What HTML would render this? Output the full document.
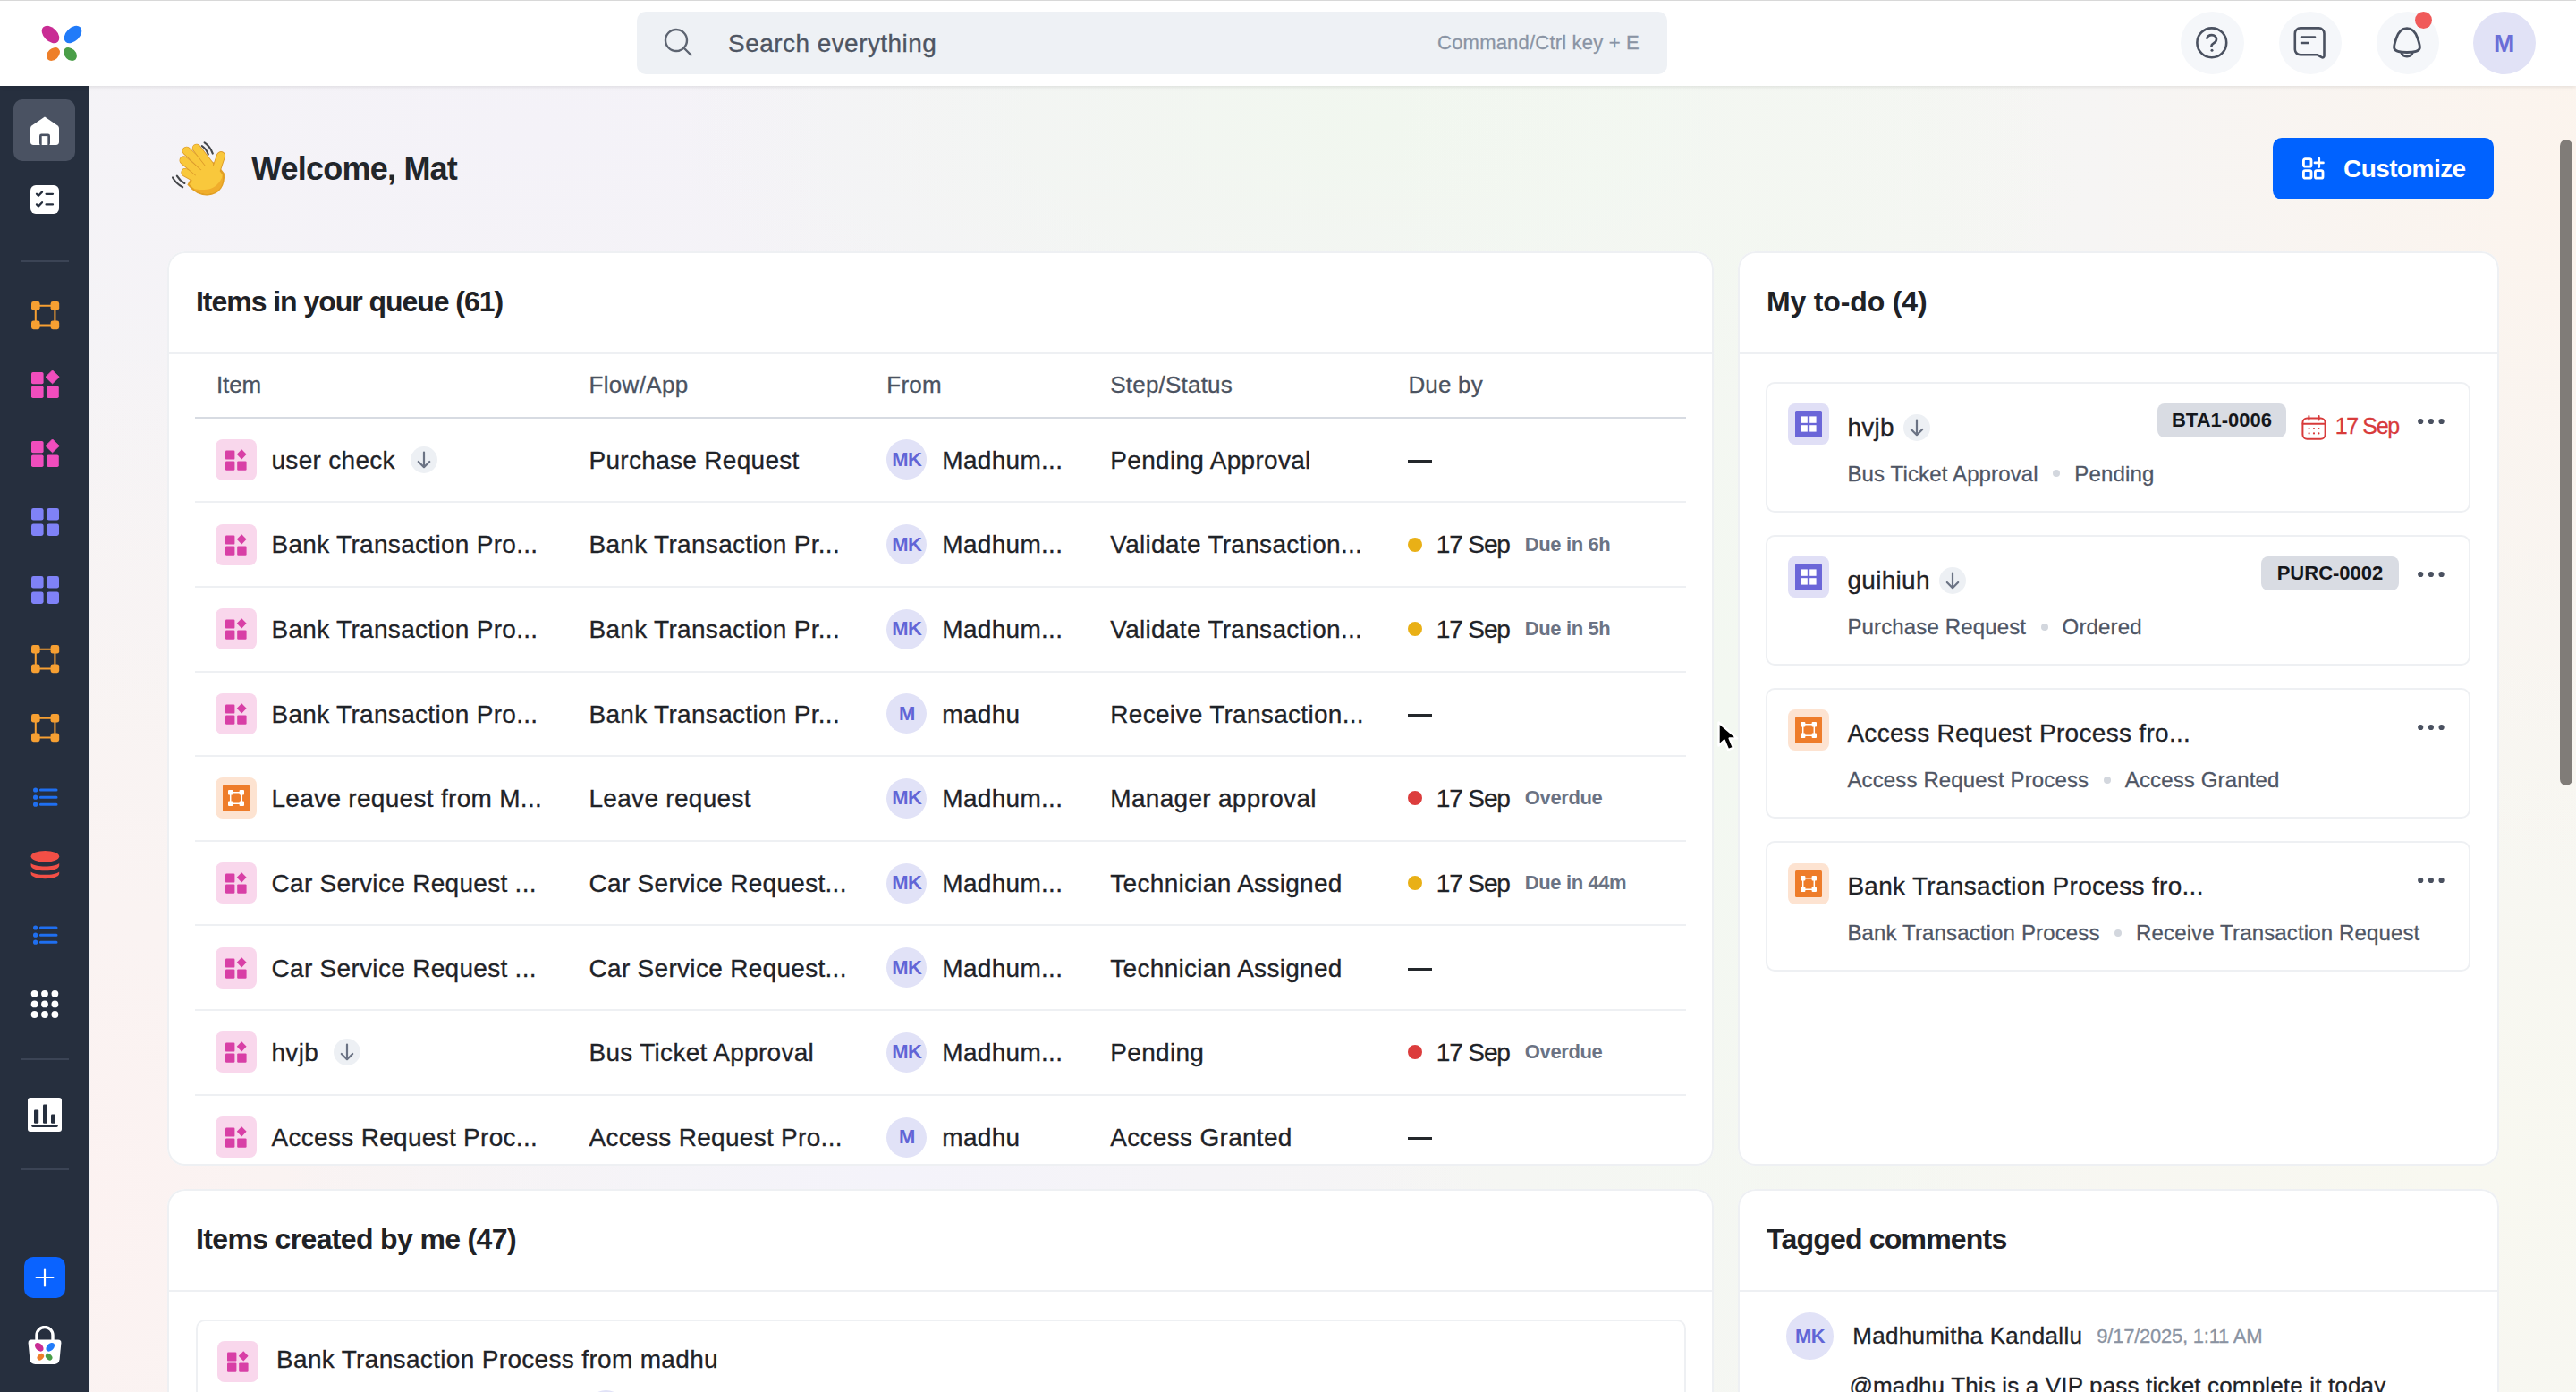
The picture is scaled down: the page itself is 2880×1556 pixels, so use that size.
<!DOCTYPE html>
<html>
<head>
<meta charset="utf-8">
<style>
*{box-sizing:border-box;margin:0;padding:0}
html,body{width:2880px;height:1556px;overflow:hidden}
body{position:relative;font-family:"Liberation Sans",sans-serif;color:#1f2328;
background:
 radial-gradient(ellipse 450px 1300px at 1930px 800px, rgba(243,248,241,1), rgba(243,248,241,0) 100%),
 radial-gradient(ellipse 800px 350px at 1550px 140px, rgba(241,247,239,1), rgba(241,247,239,0) 100%),
 radial-gradient(ellipse 550px 800px at 2880px 200px, rgba(252,244,237,1), rgba(252,244,237,0) 100%),
 radial-gradient(ellipse 1000px 900px at 2750px 1300px, rgba(248,248,240,1), rgba(248,248,240,0) 100%),
 radial-gradient(ellipse 700px 250px at 1000px 1315px, rgba(244,243,250,1), rgba(244,243,250,0) 100%),
 radial-gradient(ellipse 700px 1000px at 80px 1350px, rgba(252,242,241,1), rgba(252,242,241,0) 100%),
 radial-gradient(ellipse 1500px 700px at 600px 150px, rgba(244,242,248,1), rgba(244,242,248,0) 100%),
 #f6f5f4;-webkit-text-stroke-width:0.3px}
.abs{position:absolute}
.t{position:absolute;white-space:nowrap;line-height:1}
#topline{left:0;top:0;width:2880px;height:1px;background:#d8d8d8;z-index:5}
#header{left:0;top:0;width:2880px;height:96px;background:#fff;box-shadow:0 1px 5px rgba(0,0,0,0.10);z-index:3}
#sidebar{left:0;top:96px;width:101px;height:1460px;background:#262f3e;z-index:2;border-right:1px solid #f3f3f5}
.card{position:absolute;background:#fff;box-shadow:inset 0 0 0 2px #eef0f3;border-radius:20px;overflow:hidden}
.sep{position:absolute;left:0;right:0;height:2px;background:#eef0f3}

/*MAINCSS*/
.ctitle{font-size:32px;font-weight:700;color:#1f2226;-webkit-text-stroke-width:0}
.th{font-size:26px;color:#4b5361}
.row{position:absolute;left:31px;width:1667px;height:94.64px}
.rsep{position:absolute;left:0;right:0;top:0;height:2px;background:#eef0f3}
.c{position:absolute;top:2px;bottom:0;display:flex;align-items:center;white-space:nowrap}
.rt{font-size:28px;color:#1f2328;letter-spacing:0.3px;line-height:1;white-space:nowrap;position:relative;top:0.8px}
.ib{width:46px;height:46px;border-radius:8px;display:flex;align-items:center;justify-content:center;flex:none}
.ib.pink{background:#f9d7ec}
.ib.orange{background:#fde3d1}
.ib.lav{background:#e0dff6}
.arr{width:30px;height:30px;border-radius:50%;background:#edf0f4;margin-left:17px;flex:none}
.arr svg{display:block}
.av{width:45px;height:45px;border-radius:50%;background:#e1e2f7;color:#6165d6;font-weight:700;font-size:22px;display:flex;align-items:center;justify-content:center;flex:none;letter-spacing:-0.5px}
.dash{width:27px;height:3px;background:#23272b;position:relative;top:1.5px}
.dot{width:16px;height:16px;border-radius:50%;flex:none}
.due{font-size:22px;font-weight:700;color:#6b7384;margin-left:17px;letter-spacing:-0.4px;line-height:1}
.todo{position:absolute;left:31px;width:788px;height:146px;border-radius:10px;box-shadow:inset 0 0 0 2px #eef0f3}
.tt{display:flex;align-items:center;height:50px;font-size:28px;color:#1f2328;letter-spacing:0.3px;white-space:nowrap}
.tt .arr{margin-left:10px}
.st{font-size:24px;color:#4f5665;letter-spacing:0.14px}
.sdot{display:inline-block;width:8px;height:8px;border-radius:50%;background:#d3d7de;margin:0 16px 0 16.5px;vertical-align:middle;position:relative;top:-2px}
[style*="font-weight:700"],.badge,.due,.av{-webkit-text-stroke-width:0}
.badge{position:absolute;top:24.8px;height:38px;border-radius:8px;background:#d9dce3;font-size:22px;font-weight:700;color:#15171b;display:flex;align-items:center;justify-content:center;letter-spacing:0px}
/*/MAINCSS*/</style>
</head>
<body>
<div id="topline" class="abs"></div>
<div id="header" class="abs">
  <!-- logo -->
  <svg class="abs" style="left:44px;top:26px" width="52" height="46" viewBox="0 0 52 46">
    <ellipse cx="12.5" cy="12.5" rx="11.5" ry="7.6" transform="rotate(45 12.5 12.5)" fill="#c92c94"/>
    <ellipse cx="37.5" cy="12.5" rx="11.5" ry="7.6" transform="rotate(-45 37.5 12.5)" fill="#217bf9"/>
    <ellipse cx="15.5" cy="34.5" rx="8.5" ry="6.2" transform="rotate(-45 15.5 34.5)" fill="#ee7f29"/>
    <ellipse cx="34.5" cy="34.5" rx="8.5" ry="6.2" transform="rotate(45 34.5 34.5)" fill="#4a9e48"/>
  </svg>
  <!-- search -->
  <div class="abs" style="left:712px;top:13px;width:1152px;height:70px;background:#eef1f5;border-radius:10px">
    <svg class="abs" style="left:30px;top:18px" width="34" height="34" viewBox="0 0 34 34">
      <circle cx="14" cy="14" r="12" fill="none" stroke="#5d6471" stroke-width="2.4"/>
      <line x1="23" y1="23" x2="30.5" y2="30.5" stroke="#5d6471" stroke-width="2.4" stroke-linecap="round"/>
    </svg>
    <div class="t" style="left:102px;top:21.5px;font-size:28px;color:#4e5562;letter-spacing:0.45px">Search everything</div>
    <div class="t" style="right:31px;top:23.6px;font-size:22px;color:#8a94a4;letter-spacing:0.2px">Command/Ctrl key + E</div>
  </div>
  <!-- right icons -->
  <div class="abs" style="left:2438px;top:13px;width:71px;height:70px;border-radius:50%;background:#f5f7fa"></div>
  <div class="abs" style="left:2548px;top:13px;width:70px;height:70px;border-radius:50%;background:#f5f7fa"></div>
  <div class="abs" style="left:2657px;top:13px;width:70px;height:70px;border-radius:50%;background:#f5f7fa"></div>
  <div class="abs" style="left:2765px;top:13px;width:70px;height:70px;border-radius:50%;background:#e1e2f6"></div>
  <div class="t" style="left:2788px;top:34.6px;font-size:28px;font-weight:700;color:#6a6ed7">M</div>

  <svg class="abs" style="left:2455px;top:30px" width="36" height="36" viewBox="0 0 36 36" fill="none" stroke="#4a5160" stroke-width="2.6" stroke-linecap="round" stroke-linejoin="round">
    <circle cx="17.8" cy="17.8" r="16.4"/>
    <path d="M12.4 12.8 C13 10.5 15 9.1 17.8 9.1 C20.8 9.1 23 11.2 23 14 C23 16.6 21 17.6 19.4 18.6 C18 19.4 17.4 20.4 17.4 21.8"/>
    <circle cx="18" cy="26.2" r="1.5" fill="#4a5160" stroke="none"/>
  </svg>
  <svg class="abs" style="left:2564px;top:29px" width="37" height="38" viewBox="0 0 37 38" fill="none" stroke="#4a5160" stroke-width="2.6" stroke-linejoin="round" stroke-linecap="round">
    <path d="M7.8 2.4 H28.5 a6 6 0 0 1 6 6 V33.6 a1.8 1.8 0 0 1 -2.7 1.6 L27 32.3 H7.8 a6 6 0 0 1 -6 -6 V8.4 a6 6 0 0 1 6 -6 Z"/>
    <path d="M9 12.5 H24 M9 19 H16.6"/>
  </svg>
  <svg class="abs" style="left:2672px;top:28px" width="38" height="40" viewBox="0 0 38 40" fill="none" stroke="#4a5160" stroke-width="2.8" stroke-linejoin="round" stroke-linecap="round">
    <path d="M19 3.6 C12 3.6 9 9 7.2 14.5 C5.6 19 4.6 22 4.6 25 C4.6 28 8 30.5 19 30.5 C30 30.5 33.4 28 33.4 25 C33.4 22 32.4 19 30.8 14.5 C29 9 26 3.6 19 3.6 Z"/>
    <path d="M12.8 30.8 C14 36.5 24 36.5 25.2 30.8"/>
  </svg>
  <div class="abs" style="left:2700px;top:13px;width:19px;height:19px;border-radius:50%;background:#f05a5a"></div>
</div>
<div id="sidebar" class="abs">
  <div class="abs" style="left:15px;top:15px;width:69px;height:69px;border-radius:10px;background:#4a5262"></div>
  <svg class="abs" style="left:34px;top:34px" width="32" height="32" viewBox="0 0 32 32">
    <path d="M16 0.6 L30.6 10.4 Q32 11.4 32 13.2 V28.6 Q32 32 28.6 32 H3.4 Q0 32 0 28.6 V13.2 Q0 11.4 1.4 10.4 Z" fill="#fff"/>
    <rect x="10" y="19.4" width="12" height="13" rx="2.4" fill="#4a5262"/>
    <rect x="12.7" y="22.1" width="6.6" height="10" fill="#fff"/>
  </svg>
  <svg class="abs" style="left:34px;top:111px" width="32" height="32" viewBox="0 0 32 32">
    <rect x="0" y="0" width="32" height="32" rx="6" fill="#fff"/>
    <g fill="none" stroke="#262f3e" stroke-width="2.3" stroke-linecap="round" stroke-linejoin="round">
      <path d="M7 9.8 L9 11.8 L13 7.6 M17.6 9.8 H25"/>
      <path d="M7 21.4 L9 23.4 L13 19.2 M17.6 21.4 H25"/>
    </g>
  </svg>
  <div class="abs" style="left:23px;top:195px;width:54px;height:2px;background:#3b4455"></div>
  <svg class="abs" style="left:35px;top:241px" width="32" height="32" viewBox="0 0 32 32" fill="#f7a032">
    <rect x="0" y="0" width="9.6" height="9.6" rx="2.4"/><rect x="21.6" y="0" width="9.6" height="9.6" rx="2.4"/>
    <rect x="0" y="21.6" width="9.6" height="9.6" rx="2.4"/><rect x="21.6" y="21.6" width="9.6" height="9.6" rx="2.4"/>
    <path d="M9 4.8 H22 M9 26.4 H22 M4.8 9 V22 M26.4 9 V22" stroke="#f7a032" stroke-width="2"/>
  </svg>
  <svg class="abs" style="left:35px;top:318px" width="32" height="32" viewBox="0 0 32 32" fill="#f04dbd">
    <rect x="0" y="2" width="13.6" height="13.2" rx="1.8"/><rect x="0" y="17.4" width="13.6" height="13.6" rx="1.8"/>
    <rect x="17.2" y="17.4" width="13.6" height="13.6" rx="1.8"/>
    <path d="M23.6 0 L31.2 7.4 L23.6 14.8 L16 7.4 Z" stroke="#f04dbd" stroke-width="1" stroke-linejoin="round"/>
  </svg>
  <svg class="abs" style="left:35px;top:395px" width="32" height="32" viewBox="0 0 32 32" fill="#f04dbd">
    <rect x="0" y="2" width="13.6" height="13.2" rx="1.8"/><rect x="0" y="17.4" width="13.6" height="13.6" rx="1.8"/>
    <rect x="17.2" y="17.4" width="13.6" height="13.6" rx="1.8"/>
    <path d="M23.6 0 L31.2 7.4 L23.6 14.8 L16 7.4 Z" stroke="#f04dbd" stroke-width="1" stroke-linejoin="round"/>
  </svg>
  <svg class="abs" style="left:35px;top:472px" width="32" height="32" viewBox="0 0 32 32" fill="#7f82f7">
    <rect x="0" y="0" width="13.6" height="13.6" rx="2.4"/><rect x="17.4" y="0" width="13.6" height="13.6" rx="2.4"/>
    <rect x="0" y="17.4" width="13.6" height="13.6" rx="2.4"/><rect x="17.4" y="17.4" width="13.6" height="13.6" rx="2.4"/>
  </svg>
  <svg class="abs" style="left:35px;top:548px" width="32" height="32" viewBox="0 0 32 32" fill="#7f82f7">
    <rect x="0" y="0" width="13.6" height="13.6" rx="2.4"/><rect x="17.4" y="0" width="13.6" height="13.6" rx="2.4"/>
    <rect x="0" y="17.4" width="13.6" height="13.6" rx="2.4"/><rect x="17.4" y="17.4" width="13.6" height="13.6" rx="2.4"/>
  </svg>
  <svg class="abs" style="left:35px;top:625px" width="32" height="32" viewBox="0 0 32 32" fill="#f7a032">
    <rect x="0" y="0" width="9.6" height="9.6" rx="2.4"/><rect x="21.6" y="0" width="9.6" height="9.6" rx="2.4"/>
    <rect x="0" y="21.6" width="9.6" height="9.6" rx="2.4"/><rect x="21.6" y="21.6" width="9.6" height="9.6" rx="2.4"/>
    <path d="M9 4.8 H22 M9 26.4 H22 M4.8 9 V22 M26.4 9 V22" stroke="#f7a032" stroke-width="2"/>
  </svg>
  <svg class="abs" style="left:35px;top:702px" width="32" height="32" viewBox="0 0 32 32" fill="#f7a032">
    <rect x="0" y="0" width="9.6" height="9.6" rx="2.4"/><rect x="21.6" y="0" width="9.6" height="9.6" rx="2.4"/>
    <rect x="0" y="21.6" width="9.6" height="9.6" rx="2.4"/><rect x="21.6" y="21.6" width="9.6" height="9.6" rx="2.4"/>
    <path d="M9 4.8 H22 M9 26.4 H22 M4.8 9 V22 M26.4 9 V22" stroke="#f7a032" stroke-width="2"/>
  </svg>
  <svg class="abs" style="left:35px;top:782px" width="32" height="26" viewBox="0 0 32 26" fill="#1f6ff0">
    <circle cx="4.6" cy="5" r="2.6"/><circle cx="4.6" cy="13.2" r="2.6"/><circle cx="4.6" cy="21.2" r="2.6"/>
    <path d="M10.4 5 H28 M10.4 13.2 H28 M10.4 21.2 H28" stroke="#1f6ff0" stroke-width="3" stroke-linecap="round"/>
  </svg>
  <svg class="abs" style="left:34px;top:854px" width="33" height="33" viewBox="0 0 33 33" fill="#f34f46">
    <ellipse cx="16.4" cy="7.3" rx="15.8" ry="6.3"/>
    <path d="M0.6 15 C5 19.6 27.8 19.6 32.2 15 L32.2 17.4 C32.2 21 25 23.2 16.4 23.2 C7.8 23.2 0.6 21 0.6 17.4 Z"/>
    <path d="M0.6 24.4 C5 29 27.8 29 32.2 24.4 L32.2 26.6 C32.2 30.2 25 32.2 16.4 32.2 C7.8 32.2 0.6 30.2 0.6 26.6 Z"/>
  </svg>
  <svg class="abs" style="left:35px;top:936px" width="32" height="26" viewBox="0 0 32 26" fill="#1f6ff0">
    <circle cx="4.6" cy="5" r="2.6"/><circle cx="4.6" cy="13.2" r="2.6"/><circle cx="4.6" cy="21.2" r="2.6"/>
    <path d="M10.4 5 H28 M10.4 13.2 H28 M10.4 21.2 H28" stroke="#1f6ff0" stroke-width="3" stroke-linecap="round"/>
  </svg>
  <svg class="abs" style="left:34px;top:1010px" width="32" height="32" viewBox="0 0 32 32" fill="#fff">
    <circle cx="4.6" cy="4.8" r="3.9"/><circle cx="16" cy="4.8" r="3.9"/><circle cx="27.4" cy="4.8" r="3.9"/>
    <circle cx="4.6" cy="16.4" r="3.9"/><circle cx="16" cy="16.4" r="3.9"/><circle cx="27.4" cy="16.4" r="3.9"/>
    <circle cx="4.6" cy="28" r="3.9"/><circle cx="16" cy="28" r="3.9"/><circle cx="27.4" cy="28" r="3.9"/>
  </svg>
  <div class="abs" style="left:23px;top:1087px;width:54px;height:2px;background:#3b4455"></div>
  <svg class="abs" style="left:31px;top:1131px" width="38" height="38" viewBox="0 0 38 38">
    <rect x="0" y="0" width="38" height="38" rx="3" fill="#fff"/>
    <g fill="#262f3e"><rect x="7" y="13.4" width="5.2" height="15.4" rx="1.2"/><rect x="17" y="7.6" width="5" height="21.2" rx="1.2"/><rect x="26" y="18.6" width="5" height="10.2" rx="1.2"/>
    <rect x="4.2" y="30.2" width="29.6" height="2.8" rx="1.4"/></g>
  </svg>
  <div class="abs" style="left:23px;top:1210px;width:54px;height:2px;background:#3b4455"></div>
  <div class="abs" style="left:27px;top:1309px;width:46px;height:46px;border-radius:10px;background:#0a63ff"></div>
  <svg class="abs" style="left:27px;top:1309px" width="46" height="46" viewBox="0 0 46 46"><path d="M23 13.6 V32.4 M13.6 23 H32.4" stroke="#fff" stroke-width="2.2" stroke-linecap="round"/></svg>
  <svg class="abs" style="left:31px;top:1386px" width="38" height="44" viewBox="0 0 38 44">
    <path d="M10 17 V10.5 a9 9 0 0 1 18 0 V17" fill="none" stroke="#fff" stroke-width="3.4"/>
    <path d="M4 15.6 H34 Q37.6 15.6 37.4 19.2 L35.6 37.6 Q35 43 29.6 43 H8.4 Q3 43 2.4 37.6 L0.6 19.2 Q0.4 15.6 4 15.6 Z" fill="#fff"/>
    <g transform="translate(19 29.5) scale(1.3) translate(-19 -29)">
    <ellipse cx="14.2" cy="24.6" rx="4.4" ry="2.9" transform="rotate(45 14.2 24.6)" fill="#c92c94"/>
    <ellipse cx="23.8" cy="24.6" rx="4.4" ry="2.9" transform="rotate(-45 23.8 24.6)" fill="#217bf9"/>
    <ellipse cx="15.4" cy="33" rx="3.3" ry="2.4" transform="rotate(-45 15.4 33)" fill="#ee7f29"/>
    <ellipse cx="22.6" cy="33" rx="3.3" ry="2.4" transform="rotate(45 22.6 33)" fill="#4a9e48"/>
    </g>
  </svg>
</div>












<!--MAIN-->
<svg class="abs" style="left:170px;top:140px" width="120" height="90" viewBox="0 0 120 90">
  <g fill="none" stroke="#45474b" stroke-width="2.1" stroke-linecap="round">
   <path d="M58.6 19.4 C62.6 22 66 26.6 67.8 31.6"/><path d="M55.8 23.2 C58.8 25.2 61.4 28.6 62.8 32.6"/>
   <path d="M23 58.4 C25.6 63 29.4 66.6 34.2 69.2"/><path d="M27.8 56.6 C29.8 60 32.4 62.8 36.4 65"/>
  </g>
  <g stroke-linecap="round">
   <path d="M47 55 L62 39 L72 44 L80 54 C81 66 76 77 62 77.5 C53 78 46 73 40.5 66.5 Z" fill="#e2a024" stroke="#e2a024" stroke-width="1.8"/>
   <line x1="37.2" y1="52.8" x2="50" y2="60" stroke="#dc9a2a" stroke-width="9.8"/><line x1="37.2" y1="52.8" x2="50" y2="60" stroke="#f9c83c" stroke-width="8.2"/>
   <line x1="35.4" y1="39.2" x2="52" y2="53" stroke="#dc9a2a" stroke-width="9.8"/><line x1="35.4" y1="39.2" x2="52" y2="53" stroke="#f9c83c" stroke-width="8.2"/>
   <line x1="38.5" y1="28.6" x2="57" y2="46" stroke="#dc9a2a" stroke-width="9.8"/><line x1="38.5" y1="28.6" x2="57" y2="46" stroke="#f9c83c" stroke-width="8.2"/>
   <line x1="49.7" y1="25.6" x2="64" y2="44" stroke="#dc9a2a" stroke-width="9.8"/><line x1="49.7" y1="25.6" x2="64" y2="44" stroke="#f9c83c" stroke-width="8.2"/>
   <line x1="71" y1="52" x2="77" y2="34.2" stroke="#dc9a2a" stroke-width="10.2"/><line x1="71" y1="52" x2="77" y2="34.2" stroke="#f9c83c" stroke-width="8.4"/>
   <path d="M48.5 56.5 L63 42 L72 47 L78.6 55 C79.6 66 75 76 62 76.4 C53.5 76.8 47 72 41.8 66 Z" fill="#f9c83c"/>
   <path d="M79 60 C79 70 73 76.4 62 76.4 C55 76.6 50 74 46 70.5 C54 73 66 73 72 67 C76 63 78 60 79 56 Z" fill="#f0ad2c"/>
  </g>
</svg>
<div class="t" style="left:281px;top:170.5px;font-size:36px;font-weight:700;color:#22262b;letter-spacing:-0.78px">Welcome, Mat</div>
<div class="abs" style="left:2541px;top:154px;width:247px;height:69px;border-radius:10px;background:#0062ff">
  <svg class="abs" style="left:33px;top:22px" width="26" height="26" viewBox="0 0 26 26" fill="none" stroke="#fff" stroke-width="2.8">
    <rect x="1.4" y="1.6" width="8.6" height="8.6" rx="1.8"/><rect x="1.4" y="14.6" width="8.6" height="8.6" rx="1.8"/><rect x="14.4" y="14.6" width="8.6" height="8.6" rx="1.8"/>
    <path d="M18.7 1.2 V10.6 M14 5.9 H23.4" stroke-linecap="round"/>
  </svg>
  <div class="t" style="left:79px;top:20.9px;font-size:28px;font-weight:700;color:#fff;letter-spacing:-0.55px">Customize</div>
</div>

<div class="card" style="left:187px;top:281px;width:1729px;height:1022px">
<div class="t ctitle" style="left:32px;top:40.2px;letter-spacing:-1.04px">Items in your queue (61)</div>
<div class="sep" style="top:113px"></div>
<div class="t th" style="left:55px;top:136px;letter-spacing:-0.14px">Item</div>
<div class="t th" style="left:471.5px;top:136px;letter-spacing:0.33px">Flow/App</div>
<div class="t th" style="left:804.3px;top:136px;letter-spacing:0.2px">From</div>
<div class="t th" style="left:1054.3px;top:136px;letter-spacing:0.2px">Step/Status</div>
<div class="t th" style="left:1387.4px;top:136px;letter-spacing:0.2px">Due by</div>
<div class="abs" style="left:31px;top:185px;width:1667px;height:2px;background:#d7dbe2"></div>
<div class="row" style="top:184.60px"><div class="c" style="left:23px"><div class="ib pink"><svg width="24" height="24" viewBox="0 0 24 24" fill="#d83fa6"><rect x="0" y="1.6" width="10.4" height="10" rx="1.2"/><rect x="0" y="13.4" width="10.4" height="10.4" rx="1.2"/><rect x="13.2" y="13.4" width="10.4" height="10.4" rx="1.2"/><path d="M18.2 0.2 L23.6 5.8 L18.2 11.4 L12.8 5.8 Z"/></svg></div><span class="rt" style="margin-left:16.5px">user check</span><div class="arr"><svg width="30" height="30" viewBox="0 0 30 30" fill="none" stroke="#6b7384" stroke-width="2.2" stroke-linecap="round" stroke-linejoin="round"><path d="M15 6.5 V23 M8.8 17 L15 23.2 L21.2 17"/></svg></div></div><div class="c" style="left:440.5px"><span class="rt">Purchase Request</span></div><div class="c" style="left:773.3px"><div class="av">MK</div><span class="rt" style="margin-left:17px">Madhum...</span></div><div class="c" style="left:1023.3px"><span class="rt">Pending Approval</span></div><div class="c" style="left:1356px"><div class="dash"></div></div></div>
<div class="row" style="top:279.24px"><div class="rsep"></div><div class="c" style="left:23px"><div class="ib pink"><svg width="24" height="24" viewBox="0 0 24 24" fill="#d83fa6"><rect x="0" y="1.6" width="10.4" height="10" rx="1.2"/><rect x="0" y="13.4" width="10.4" height="10.4" rx="1.2"/><rect x="13.2" y="13.4" width="10.4" height="10.4" rx="1.2"/><path d="M18.2 0.2 L23.6 5.8 L18.2 11.4 L12.8 5.8 Z"/></svg></div><span class="rt" style="margin-left:16.5px">Bank Transaction Pro...</span></div><div class="c" style="left:440.5px"><span class="rt">Bank Transaction Pr...</span></div><div class="c" style="left:773.3px"><div class="av">MK</div><span class="rt" style="margin-left:17px">Madhum...</span></div><div class="c" style="left:1023.3px"><span class="rt">Validate Transaction...</span></div><div class="c" style="left:1356px"><div class="dot" style="background:#e9b016"></div><span class="rt" style="margin-left:15.7px;letter-spacing:-1.1px">17 Sep</span><span class="due">Due in 6h</span></div></div>
<div class="row" style="top:373.88px"><div class="rsep"></div><div class="c" style="left:23px"><div class="ib pink"><svg width="24" height="24" viewBox="0 0 24 24" fill="#d83fa6"><rect x="0" y="1.6" width="10.4" height="10" rx="1.2"/><rect x="0" y="13.4" width="10.4" height="10.4" rx="1.2"/><rect x="13.2" y="13.4" width="10.4" height="10.4" rx="1.2"/><path d="M18.2 0.2 L23.6 5.8 L18.2 11.4 L12.8 5.8 Z"/></svg></div><span class="rt" style="margin-left:16.5px">Bank Transaction Pro...</span></div><div class="c" style="left:440.5px"><span class="rt">Bank Transaction Pr...</span></div><div class="c" style="left:773.3px"><div class="av">MK</div><span class="rt" style="margin-left:17px">Madhum...</span></div><div class="c" style="left:1023.3px"><span class="rt">Validate Transaction...</span></div><div class="c" style="left:1356px"><div class="dot" style="background:#e9b016"></div><span class="rt" style="margin-left:15.7px;letter-spacing:-1.1px">17 Sep</span><span class="due">Due in 5h</span></div></div>
<div class="row" style="top:468.52px"><div class="rsep"></div><div class="c" style="left:23px"><div class="ib pink"><svg width="24" height="24" viewBox="0 0 24 24" fill="#d83fa6"><rect x="0" y="1.6" width="10.4" height="10" rx="1.2"/><rect x="0" y="13.4" width="10.4" height="10.4" rx="1.2"/><rect x="13.2" y="13.4" width="10.4" height="10.4" rx="1.2"/><path d="M18.2 0.2 L23.6 5.8 L18.2 11.4 L12.8 5.8 Z"/></svg></div><span class="rt" style="margin-left:16.5px">Bank Transaction Pro...</span></div><div class="c" style="left:440.5px"><span class="rt">Bank Transaction Pr...</span></div><div class="c" style="left:773.3px"><div class="av">M</div><span class="rt" style="margin-left:17px">madhu</span></div><div class="c" style="left:1023.3px"><span class="rt">Receive Transaction...</span></div><div class="c" style="left:1356px"><div class="dash"></div></div></div>
<div class="row" style="top:563.16px"><div class="rsep"></div><div class="c" style="left:23px"><div class="ib orange"><svg width="30" height="30" viewBox="0 0 30 30"><rect width="30" height="30" rx="1.5" fill="#ee7c2a"/><g fill="#fff"><rect x="6" y="6" width="5.4" height="5.4" rx="1"/><rect x="18.6" y="6" width="5.4" height="5.4" rx="1"/><rect x="6" y="18.6" width="5.4" height="5.4" rx="1"/><rect x="18.6" y="18.6" width="5.4" height="5.4" rx="1"/></g><path d="M10 8.7 H20 M10 21.3 H20 M8.7 10 V20 M21.3 10 V20" stroke="#fff" stroke-width="1.5"/></svg></div><span class="rt" style="margin-left:16.5px">Leave request from M...</span></div><div class="c" style="left:440.5px"><span class="rt">Leave request</span></div><div class="c" style="left:773.3px"><div class="av">MK</div><span class="rt" style="margin-left:17px">Madhum...</span></div><div class="c" style="left:1023.3px"><span class="rt">Manager approval</span></div><div class="c" style="left:1356px"><div class="dot" style="background:#dc3d3d"></div><span class="rt" style="margin-left:15.7px;letter-spacing:-1.1px">17 Sep</span><span class="due">Overdue</span></div></div>
<div class="row" style="top:657.80px"><div class="rsep"></div><div class="c" style="left:23px"><div class="ib pink"><svg width="24" height="24" viewBox="0 0 24 24" fill="#d83fa6"><rect x="0" y="1.6" width="10.4" height="10" rx="1.2"/><rect x="0" y="13.4" width="10.4" height="10.4" rx="1.2"/><rect x="13.2" y="13.4" width="10.4" height="10.4" rx="1.2"/><path d="M18.2 0.2 L23.6 5.8 L18.2 11.4 L12.8 5.8 Z"/></svg></div><span class="rt" style="margin-left:16.5px">Car Service Request ...</span></div><div class="c" style="left:440.5px"><span class="rt">Car Service Request...</span></div><div class="c" style="left:773.3px"><div class="av">MK</div><span class="rt" style="margin-left:17px">Madhum...</span></div><div class="c" style="left:1023.3px"><span class="rt">Technician Assigned</span></div><div class="c" style="left:1356px"><div class="dot" style="background:#e9b016"></div><span class="rt" style="margin-left:15.7px;letter-spacing:-1.1px">17 Sep</span><span class="due">Due in 44m</span></div></div>
<div class="row" style="top:752.44px"><div class="rsep"></div><div class="c" style="left:23px"><div class="ib pink"><svg width="24" height="24" viewBox="0 0 24 24" fill="#d83fa6"><rect x="0" y="1.6" width="10.4" height="10" rx="1.2"/><rect x="0" y="13.4" width="10.4" height="10.4" rx="1.2"/><rect x="13.2" y="13.4" width="10.4" height="10.4" rx="1.2"/><path d="M18.2 0.2 L23.6 5.8 L18.2 11.4 L12.8 5.8 Z"/></svg></div><span class="rt" style="margin-left:16.5px">Car Service Request ...</span></div><div class="c" style="left:440.5px"><span class="rt">Car Service Request...</span></div><div class="c" style="left:773.3px"><div class="av">MK</div><span class="rt" style="margin-left:17px">Madhum...</span></div><div class="c" style="left:1023.3px"><span class="rt">Technician Assigned</span></div><div class="c" style="left:1356px"><div class="dash"></div></div></div>
<div class="row" style="top:847.08px"><div class="rsep"></div><div class="c" style="left:23px"><div class="ib pink"><svg width="24" height="24" viewBox="0 0 24 24" fill="#d83fa6"><rect x="0" y="1.6" width="10.4" height="10" rx="1.2"/><rect x="0" y="13.4" width="10.4" height="10.4" rx="1.2"/><rect x="13.2" y="13.4" width="10.4" height="10.4" rx="1.2"/><path d="M18.2 0.2 L23.6 5.8 L18.2 11.4 L12.8 5.8 Z"/></svg></div><span class="rt" style="margin-left:16.5px">hvjb</span><div class="arr"><svg width="30" height="30" viewBox="0 0 30 30" fill="none" stroke="#6b7384" stroke-width="2.2" stroke-linecap="round" stroke-linejoin="round"><path d="M15 6.5 V23 M8.8 17 L15 23.2 L21.2 17"/></svg></div></div><div class="c" style="left:440.5px"><span class="rt">Bus Ticket Approval</span></div><div class="c" style="left:773.3px"><div class="av">MK</div><span class="rt" style="margin-left:17px">Madhum...</span></div><div class="c" style="left:1023.3px"><span class="rt">Pending</span></div><div class="c" style="left:1356px"><div class="dot" style="background:#dc3d3d"></div><span class="rt" style="margin-left:15.7px;letter-spacing:-1.1px">17 Sep</span><span class="due">Overdue</span></div></div>
<div class="row" style="top:941.72px"><div class="rsep"></div><div class="c" style="left:23px"><div class="ib pink"><svg width="24" height="24" viewBox="0 0 24 24" fill="#d83fa6"><rect x="0" y="1.6" width="10.4" height="10" rx="1.2"/><rect x="0" y="13.4" width="10.4" height="10.4" rx="1.2"/><rect x="13.2" y="13.4" width="10.4" height="10.4" rx="1.2"/><path d="M18.2 0.2 L23.6 5.8 L18.2 11.4 L12.8 5.8 Z"/></svg></div><span class="rt" style="margin-left:16.5px">Access Request Proc...</span></div><div class="c" style="left:440.5px"><span class="rt">Access Request Pro...</span></div><div class="c" style="left:773.3px"><div class="av">M</div><span class="rt" style="margin-left:17px">madhu</span></div><div class="c" style="left:1023.3px"><span class="rt">Access Granted</span></div><div class="c" style="left:1356px"><div class="dash"></div></div></div>
<div class="row" style="top:1036.36px"><div class="rsep"></div><div class="c" style="left:23px"><div class="ib pink"><svg width="24" height="24" viewBox="0 0 24 24" fill="#d83fa6"><rect x="0" y="1.6" width="10.4" height="10" rx="1.2"/><rect x="0" y="13.4" width="10.4" height="10.4" rx="1.2"/><rect x="13.2" y="13.4" width="10.4" height="10.4" rx="1.2"/><path d="M18.2 0.2 L23.6 5.8 L18.2 11.4 L12.8 5.8 Z"/></svg></div><span class="rt" style="margin-left:16.5px">Bank Transaction Pro...</span></div><div class="c" style="left:440.5px"><span class="rt">Bank Transaction Pr...</span></div><div class="c" style="left:773.3px"><div class="av">M</div><span class="rt" style="margin-left:17px">madhu</span></div><div class="c" style="left:1023.3px"><span class="rt">Receive Transaction...</span></div><div class="c" style="left:1356px"><div class="dash"></div></div></div>
</div>
<div class="card" style="left:1943px;top:281px;width:851px;height:1022px">
<div class="t ctitle" style="left:32px;top:40.2px;letter-spacing:-0.16px">My to-do (4)</div>
<div class="sep" style="top:113px"></div>
<div class="todo" style="top:145.5px"><div class="abs" style="left:25px;top:24.5px"><div class="ib lav"><svg width="30" height="30" viewBox="0 0 30 30"><rect width="30" height="30" rx="1.5" fill="#6b66d8"/><g fill="#fff"><rect x="6.4" y="6.4" width="7.4" height="7.4"/><rect x="16.2" y="6.4" width="7.4" height="7.4"/><rect x="6.4" y="16.2" width="7.4" height="7.4"/><rect x="16.2" y="16.2" width="7.4" height="7.4"/></g></svg></div></div><div class="abs tt" style="left:91.4px;top:26px">hvjb<div class="arr"><svg width="30" height="30" viewBox="0 0 30 30" fill="none" stroke="#6b7384" stroke-width="2.2" stroke-linecap="round" stroke-linejoin="round"><path d="M15 6.5 V23 M8.8 17 L15 23.2 L21.2 17"/></svg></div></div><div class="t st" style="left:91.4px;top:91.2px">Bus Ticket Approval<span class="sdot"></span>Pending</div><div class="badge" style="left:438px;width:144px">BTA1-0006</div><svg class="abs" style="left:599px;top:37px" width="28" height="28" viewBox="0 0 28 28" fill="none" stroke="#d83b3b" stroke-width="2"><rect x="1.4" y="3.4" width="25.2" height="23.4" rx="5"/><path d="M1.6 9.8 H26.4 M8.4 1 V5.6 M19.6 1 V5.6" stroke-linecap="round"/><g fill="#d83b3b" stroke="none"><circle cx="8.6" cy="15" r="1.1"/><circle cx="14" cy="15" r="1.1"/><circle cx="19.4" cy="15" r="1.1"/><circle cx="8.6" cy="20.4" r="1.1"/><circle cx="14" cy="20.4" r="1.1"/><circle cx="19.4" cy="20.4" r="1.1"/></g></svg><div class="t" style="left:636.8px;top:37.7px;font-size:25px;color:#d83b3b;letter-spacing:-1.4px">17 Sep</div><svg class="abs" style="left:728px;top:40px" width="32" height="8" viewBox="0 0 32 8" fill="#4a5160"><circle cx="4.2" cy="4" r="3.1"/><circle cx="15.9" cy="4" r="3.1"/><circle cx="27.6" cy="4" r="3.1"/></svg></div>
<div class="todo" style="top:316.7px"><div class="abs" style="left:25px;top:24.5px"><div class="ib lav"><svg width="30" height="30" viewBox="0 0 30 30"><rect width="30" height="30" rx="1.5" fill="#6b66d8"/><g fill="#fff"><rect x="6.4" y="6.4" width="7.4" height="7.4"/><rect x="16.2" y="6.4" width="7.4" height="7.4"/><rect x="6.4" y="16.2" width="7.4" height="7.4"/><rect x="16.2" y="16.2" width="7.4" height="7.4"/></g></svg></div></div><div class="abs tt" style="left:91.4px;top:26px">guihiuh<div class="arr"><svg width="30" height="30" viewBox="0 0 30 30" fill="none" stroke="#6b7384" stroke-width="2.2" stroke-linecap="round" stroke-linejoin="round"><path d="M15 6.5 V23 M8.8 17 L15 23.2 L21.2 17"/></svg></div></div><div class="t st" style="left:91.4px;top:91.2px">Purchase Request<span class="sdot"></span>Ordered</div><div class="badge" style="left:554px;width:154px">PURC-0002</div><svg class="abs" style="left:728px;top:40px" width="32" height="8" viewBox="0 0 32 8" fill="#4a5160"><circle cx="4.2" cy="4" r="3.1"/><circle cx="15.9" cy="4" r="3.1"/><circle cx="27.6" cy="4" r="3.1"/></svg></div>
<div class="todo" style="top:487.9px"><div class="abs" style="left:25px;top:24.5px"><div class="ib orange"><svg width="30" height="30" viewBox="0 0 30 30"><rect width="30" height="30" rx="1.5" fill="#ee7c2a"/><g fill="#fff"><rect x="6" y="6" width="5.4" height="5.4" rx="1"/><rect x="18.6" y="6" width="5.4" height="5.4" rx="1"/><rect x="6" y="18.6" width="5.4" height="5.4" rx="1"/><rect x="18.6" y="18.6" width="5.4" height="5.4" rx="1"/></g><path d="M10 8.7 H20 M10 21.3 H20 M8.7 10 V20 M21.3 10 V20" stroke="#fff" stroke-width="1.5"/></svg></div></div><div class="abs tt" style="left:91.4px;top:26px">Access Request Process fro...</div><div class="t st" style="left:91.4px;top:91.2px">Access Request Process<span class="sdot"></span>Access Granted</div><svg class="abs" style="left:728px;top:40px" width="32" height="8" viewBox="0 0 32 8" fill="#4a5160"><circle cx="4.2" cy="4" r="3.1"/><circle cx="15.9" cy="4" r="3.1"/><circle cx="27.6" cy="4" r="3.1"/></svg></div>
<div class="todo" style="top:659.1px"><div class="abs" style="left:25px;top:24.5px"><div class="ib orange"><svg width="30" height="30" viewBox="0 0 30 30"><rect width="30" height="30" rx="1.5" fill="#ee7c2a"/><g fill="#fff"><rect x="6" y="6" width="5.4" height="5.4" rx="1"/><rect x="18.6" y="6" width="5.4" height="5.4" rx="1"/><rect x="6" y="18.6" width="5.4" height="5.4" rx="1"/><rect x="18.6" y="18.6" width="5.4" height="5.4" rx="1"/></g><path d="M10 8.7 H20 M10 21.3 H20 M8.7 10 V20 M21.3 10 V20" stroke="#fff" stroke-width="1.5"/></svg></div></div><div class="abs tt" style="left:91.4px;top:26px">Bank Transaction Process fro...</div><div class="t st" style="left:91.4px;top:91.2px">Bank Transaction Process<span class="sdot"></span>Receive Transaction Request</div><svg class="abs" style="left:728px;top:40px" width="32" height="8" viewBox="0 0 32 8" fill="#4a5160"><circle cx="4.2" cy="4" r="3.1"/><circle cx="15.9" cy="4" r="3.1"/><circle cx="27.6" cy="4" r="3.1"/></svg></div>
</div>
<div class="card" style="left:187px;top:1329px;width:1729px;height:400px">
<div class="t ctitle" style="left:32px;top:40px;letter-spacing:-0.65px">Items created by me (47)</div>
<div class="sep" style="top:113px"></div>
<div class="todo" style="left:31.8px;top:146px;width:1666px;height:146px"><div class="abs" style="left:24.2px;top:24px"><div class="ib pink"><svg width="24" height="24" viewBox="0 0 24 24" fill="#d83fa6"><rect x="0" y="1.6" width="10.4" height="10" rx="1.2"/><rect x="0" y="13.4" width="10.4" height="10.4" rx="1.2"/><rect x="13.2" y="13.4" width="10.4" height="10.4" rx="1.2"/><path d="M18.2 0.2 L23.6 5.8 L18.2 11.4 L12.8 5.8 Z"/></svg></div></div><div class="t rt" style="left:90.2px;top:31.3px;letter-spacing:0.33px">Bank Transaction Process from madhu</div></div>
<div class="abs" style="left:468px;top:225px;width:45px;height:45px;border-radius:50%;background:#e1e2f7"></div>
</div>
<div class="card" style="left:1943px;top:1329px;width:851px;height:400px">
<div class="t ctitle" style="left:32px;top:39.6px;letter-spacing:-0.79px">Tagged comments</div>
<div class="sep" style="top:113px"></div>
<div class="av" style="position:absolute;left:54px;top:138px;width:53px;height:53px;font-size:22px">MK</div>
<div class="t" style="left:128.2px;top:151.3px;font-size:26px;color:#1f2328;letter-spacing:0.29px">Madhumitha Kandallu</div>
<div class="t" style="left:401.3px;top:154.4px;font-size:22px;color:#8a93a2;letter-spacing:-0.23px">9/17/2025, 1:11 AM</div>
<div class="t" style="left:124.4px;top:207px;font-size:26px;color:#1f2328;letter-spacing:0.16px">@madhu This is a VIP pass ticket complete it today</div>
</div>
<div class="abs" style="left:2862px;top:156px;width:14px;height:722px;border-radius:7px;background:#807c78"></div>
<svg class="abs" style="left:1918px;top:804px;z-index:10" width="30" height="42" viewBox="0 0 30 42"><path d="M3.5 3.5 L3.5 29.5 L9.8 23.6 L14.2 34.2 L20 31.8 L15.6 21.4 L24.2 21.4 Z" fill="#000" stroke="#fff" stroke-width="2.4" stroke-linejoin="round"/></svg>
<!--/MAIN-->
</body>
</html>
